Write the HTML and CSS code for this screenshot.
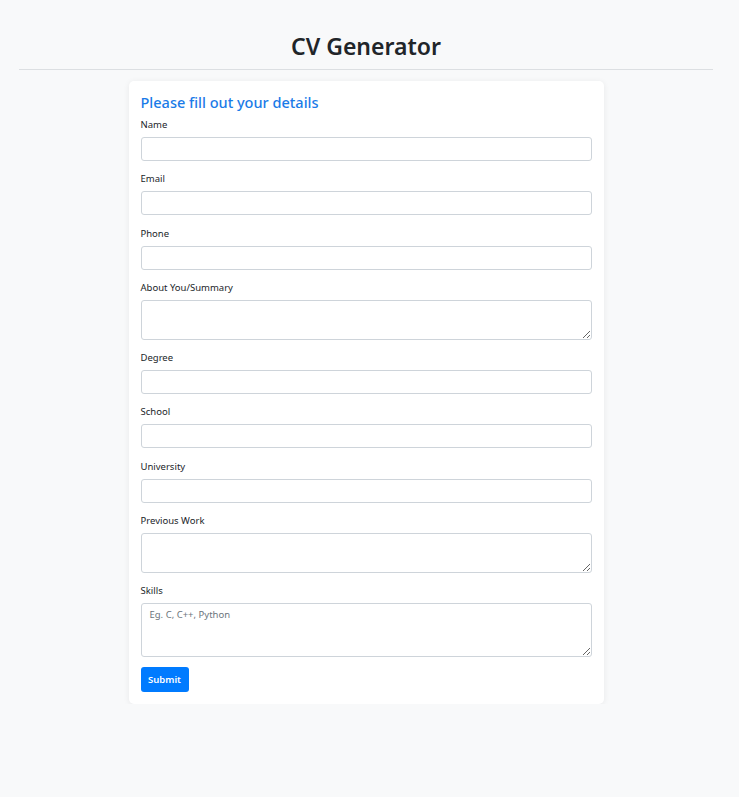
FILE: index.html
```html
<!DOCTYPE html>
<html lang="en">
<head>
<meta charset="utf-8">
<title>CV Generator</title>
<link rel="stylesheet" href="styles.css">
</head>
<body>
<div class="container">
  <h1 class="title">CV Generator</h1>
  <hr class="divider">
  <form class="card">
    <h2 class="card-title">Please fill out your details</h2>
    <div class="group">
      <label class="label" for="name">Name</label>
      <input class="field" id="name" type="text">
    </div>
    <div class="group">
      <label class="label" for="email">Email</label>
      <input class="field" id="email" type="email">
    </div>
    <div class="group">
      <label class="label" for="phone">Phone</label>
      <input class="field" id="phone" type="text">
    </div>
    <div class="group">
      <label class="label" for="about">About You/Summary</label>
      <textarea class="field area" id="about"></textarea>
    </div>
    <div class="group">
      <label class="label" for="degree">Degree</label>
      <input class="field" id="degree" type="text">
    </div>
    <div class="group">
      <label class="label" for="school">School</label>
      <input class="field" id="school" type="text">
    </div>
    <div class="group">
      <label class="label" for="uni">University</label>
      <input class="field" id="uni" type="text">
    </div>
    <div class="group">
      <label class="label" for="work">Previous Work</label>
      <textarea class="field area" id="work"></textarea>
    </div>
    <div class="group last">
      <label class="label" for="skills">Skills</label>
      <textarea class="field area tall" id="skills" placeholder="Eg. C, C++, Python"></textarea>
    </div>
    <button class="btn" type="button">Submit</button>
  </form>
</div>
</body>
</html>
```
FILE: styles.css
```css
* { box-sizing: border-box; }
html, body {
  margin: 0;
  padding: 0;
  background: #f8f9fa;
  font-family: "Noto Sans", "Open Sans", sans-serif;
  color: #212529;
}
.container {
  width: 694px;
  margin-left: 19px;
  padding-top: 29px;
}
.title {
  margin: 0;
  text-align: center;
  font-size: 23px;
  line-height: 34px;
  font-weight: 600;
  color: #212529;
}
.divider {
  margin: 6px 0 0 0;
  border: 0;
  border-top: 1px solid #dcdfe2;
  height: 0;
}
.card {
  width: 475px;
  margin: 11px auto 0;
  background: #fff;
  border-radius: 5px;
  padding: 12px 12px 12px;
  box-shadow: 0 1px 6px rgba(0, 0, 0, 0.07);
}
.card-title {
  margin: 0 0 6px;
  font-size: 14.5px;
  line-height: 19px;
  font-weight: 500;
  color: #1a7be8;
}
.group {
  margin-bottom: 11.25px;
}
.group.last {
  margin-bottom: 10px;
}
.label {
  display: block;
  font-size: 9.5px;
  line-height: 14px;
  margin-bottom: 5px;
  color: #212529;
}
.field {
  display: block;
  width: 100%;
  height: 24px;
  border: 1px solid #ced4da;
  border-radius: 3px;
  background: #fff;
  font-family: inherit;
  font-size: 9.5px;
  padding: 4px 8px;
  color: #495057;
  margin: 0;
}
.area {
  height: 40px;
  resize: vertical;
}
.tall {
  height: 54px;
}
.field::placeholder {
  color: #6c757d;
}
.btn {
  display: block;
  margin-top: 0;
  width: 48px;
  height: 25px;
  border: 0;
  border-radius: 3px;
  background: #007bff;
  color: #fff;
  font-family: inherit;
  font-size: 9.5px;
  font-weight: 600;
  padding: 0;
}
```
